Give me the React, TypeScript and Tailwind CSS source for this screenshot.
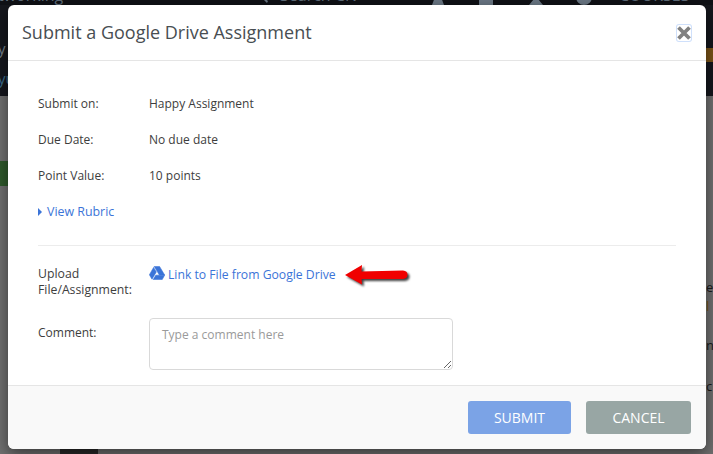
import React from "react";

function DriveIcon() {
  return (
    <svg viewBox="0 0 16 14" className="-mt-1 h-[14px] w-4 shrink-0" aria-hidden="true">
      <path d="M5.2 0.4h5.3l5.2 8.7h-5.3z" fill="#3b74d8" stroke="#3b74d8" strokeWidth="0.6" strokeLinejoin="round" />
      <path d="M4.6 1.4l2.7 4.5L3 13.2 0.4 8.8z" fill="#3b74d8" stroke="#3b74d8" strokeWidth="0.6" strokeLinejoin="round" />
      <path d="M4.2 13.6l2.6-4.4h8.8l-2.4 4.4z" fill="#3b74d8" stroke="#3b74d8" strokeWidth="0.6" strokeLinejoin="round" />
    </svg>
  );
}

function Arrow() {
  return (
    <svg
      viewBox="0 0 70 28"
      className="ml-[7px] h-7 w-[70px] shrink-0 overflow-visible [filter:drop-shadow(2px_2px_1px_rgba(0,0,0,0.75))]"
      aria-hidden="true"
    >
      <path d="M2 14 L19 4 L18.5 10.5 L60 9.5 Q64.5 10 64.5 13.5 Q64.5 17.5 60 18 L18.5 18 L19 23.5 Z" fill="#f00000" />
    </svg>
  );
}

function Row({ label, value }: { label: string; value: string }) {
  return (
    <div className="flex h-9 items-center">
      <div className="w-[111px] shrink-0">{label}</div>
      <div>{value}</div>
    </div>
  );
}

function NavIcon({ d, className }: { d: string; className: string }) {
  return (
    <svg viewBox="0 0 16 16" className={className} aria-hidden="true">
      <path d={d} fill="#6a7784" />
    </svg>
  );
}

export default function App() {
  return (
    <div className="relative h-[454px] w-[713px] overflow-hidden bg-[#707070] font-['Open_Sans',sans-serif] text-[12px] text-[#3d3d3d]">
      <div className="flex h-[96px] flex-col bg-[#15171d]">
        <div className="flex h-[5px] items-end overflow-hidden bg-[#0f1116] text-[16px] leading-[20px] text-[#5f6d7a]">
          <span className="ml-[-2px] w-[255px] shrink-0">tworking</span>
          <NavIcon className="h-4 w-4 shrink-0" d="M7 1a5 5 0 1 0 3 9l4 4 1-2-4-3a5 5 0 0 0-4-8z" />
          <span className="ml-[11px] w-[150px] shrink-0">Search CN</span>
          <NavIcon className="h-4 w-4 shrink-0" d="M8 0 L14 16 H2 Z" />
          <NavIcon className="ml-[32px] h-4 w-4 shrink-0" d="M1 0h14v16H1z" />
          <NavIcon className="ml-[34px] h-4 w-4 shrink-0" d="M6 0h4v10l5 6H1l5-6z" />
          <NavIcon className="ml-[32px] h-4 w-4 shrink-0" d="M8 0a8 8 0 1 1 0 16a8 8 0 0 1 0-16z" />
          <span className="ml-[27px] shrink-0">COURSES</span>
        </div>
        <div className="mt-[43px] flex h-[14px] justify-end">
          <div className="h-[14px] w-[7px] bg-[#7a5418]" />
        </div>
      </div>
      <div className="absolute left-[-2px] top-[38px] text-[15px] leading-5 text-[#76818b]">y</div>
      <div className="absolute left-[-2px] top-[68px] text-[15px] leading-5 text-[#3b6e8f]">yu</div>
      <div className="mt-[65px] h-[25px] w-[8px] bg-[#2f5a2c]" />
      <div className="absolute bottom-0 left-[60px] h-[5px] w-[38px] bg-[#2a2a2a]" />
      <div className="absolute right-0 top-[279px] flex w-[7px] flex-col text-[13px] leading-4 text-[#1a1a1a]">
        <span className="h-[19px]">e</span>
        <span className="h-[39px] text-[#7a5418]">l</span>
        <span className="h-[41px]">n</span>
        <span>c</span>
      </div>

      <div className="absolute left-2 top-[5px] flex h-[444px] w-[698px] flex-col overflow-hidden rounded-[6px] bg-white shadow-[0_5px_15px_rgba(0,0,0,0.5)]">
        <div className="flex h-[56px] shrink-0 items-center justify-between border-b border-[#e5e5e5] pl-[14px] pr-[15px]">
          <h1 className="text-[18px] font-normal text-[#484e52]">Submit a Google Drive Assignment</h1>
          <button className="flex h-4 w-[14px] items-center justify-center rounded-[2px] bg-white ring-1 ring-[#cfe0fb]">
            <svg viewBox="0 0 14 14" className="h-[14px] w-[14px]" aria-hidden="true">
              <path d="M1.5 1.5l11 11M12.5 1.5l-11 11" stroke="#808080" strokeWidth="3.8" />
            </svg>
          </button>
        </div>

        <div className="flex-1 px-[30px] pt-[25px]">
          <Row label="Submit on:" value="Happy Assignment" />
          <Row label="Due Date:" value="No due date" />
          <Row label="Point Value:" value="10 points" />
          <div className="flex h-9 items-center gap-[5px] text-[12.4px] text-[#3b74d8]">
            <span className="h-0 w-0 border-y-[4.5px] border-l-[4px] border-y-transparent border-l-[#3b74d8]" />
            <span>View Rubric</span>
          </div>
          <div className="mt-[15px] flex border-t border-[#ececec] pt-5">
            <div className="w-[111px] shrink-0 text-[12.25px] leading-4">
              Upload
              <br />
              File/Assignment:
            </div>
            <div className="-mt-1 flex h-[26px] items-center text-[12.2px] text-[#3b74d8]">
              <DriveIcon />
              <span className="ml-[3px]">Link to File from Google Drive</span>
              <Arrow />
            </div>
          </div>
          <div className="mt-[22px] flex">
            <div className="w-[111px] shrink-0 pt-[5px] leading-4">Comment:</div>
            <textarea
              className="-mt-[2px] h-[52px] w-[304px] resize-y rounded-[4px] border border-[#d9d9d9] px-3 py-2 text-[12px] leading-4 placeholder:text-[#9a9a9a]"
              placeholder="Type a comment here"
            />
          </div>
        </div>

        <div className="flex h-[64px] shrink-0 items-center justify-end gap-[15px] border-t border-[#e5e5e5] bg-[#f9f9f9] pb-[1px] pr-[15px]">
          <button className="h-[33px] w-[103px] rounded-[3px] bg-[#7ba3e6] text-[14px] text-white">SUBMIT</button>
          <button className="h-[33px] w-[105px] rounded-[3px] bg-[#98a6a4] text-[14px] text-white">CANCEL</button>
        </div>
      </div>
    </div>
  );
}
